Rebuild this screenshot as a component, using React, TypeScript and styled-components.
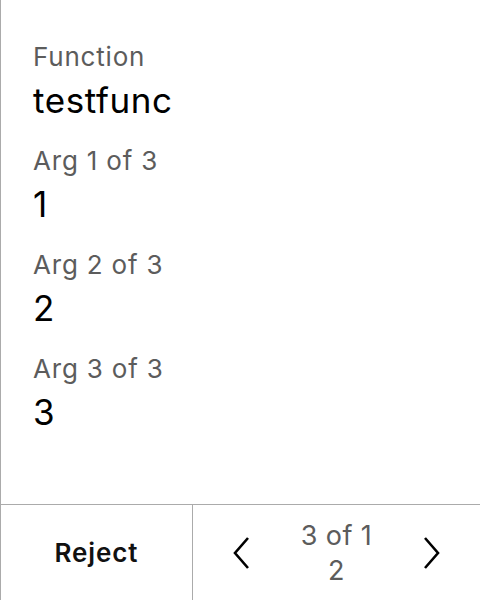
import React from 'react';
import styled, { createGlobalStyle } from 'styled-components';

const Global = createGlobalStyle`
  html, body {
    margin: 0;
    padding: 0;
    background: #fff;
  }
  body {
    font-family: Inter, "Noto Sans", sans-serif;
  }
`;

const Screen = styled.div`
  width: 480px;
  height: 600px;
  box-sizing: border-box;
  border-left: 1px solid #ababab;
  display: flex;
  flex-direction: column;
`;

const Details = styled.div`
  flex: 1;
  padding: 40px 0 0 32px;
  display: flex;
  flex-direction: column;
  gap: 22px;
`;

const Field = styled.div`
  display: flex;
  flex-direction: column;
  gap: 4px;
`;

const Label = styled.div`
  font-size: 26px;
  line-height: 34px;
  letter-spacing: 0.8px;
  color: #5c5c5c;
`;

const Value = styled.div`
  font-size: 35px;
  line-height: 44px;
  letter-spacing: 0.6px;
  color: #000;
`;

const Footer = styled.div`
  height: 95px;
  border-top: 1px solid #ababab;
  display: flex;
`;

const RejectButton = styled.button`
  width: 192px;
  border: none;
  border-right: 1px solid #ababab;
  background: none;
  font-family: inherit;
  font-size: 26px;
  font-weight: 600;
  letter-spacing: 0.9px;
  color: #111;
  padding: 0;
`;

const Pager = styled.div`
  flex: 1;
  display: grid;
  grid-template-columns: 1fr 1fr 1fr;
  align-items: center;
`;

const NavButton = styled.button`
  border: none;
  background: none;
  padding: 0;
  display: flex;
  justify-content: center;
  align-items: center;
`;

const Count = styled.div`
  text-align: center;
  font-size: 27px;
  line-height: 35px;
  letter-spacing: 0.4px;
  color: #5c5c5c;
  word-break: break-all;
  padding: 0 4px;
`;

const Chevron = ({ dir }: { dir: 'left' | 'right' }) => (
  <svg width="20" height="32" viewBox="0 0 20 32">
    <path
      d={dir === 'left' ? 'M17 1 L4 16 L17 31' : 'M3 1 L16 16 L3 31'}
      fill="none"
      stroke="#000"
      strokeWidth="2.6"
    />
  </svg>
);

const args = ['1', '2', '3'];

export default function App() {
  return (
    <>
      <Global />
      <Screen>
        <Details>
          <Field>
            <Label>Function</Label>
            <Value>testfunc</Value>
          </Field>
          {args.map((a, i) => (
            <Field key={i}>
              <Label>
                Arg {i + 1} of {args.length}
              </Label>
              <Value>{a}</Value>
            </Field>
          ))}
        </Details>
        <Footer>
          <RejectButton>Reject</RejectButton>
          <Pager>
            <NavButton>
              <Chevron dir="left" />
            </NavButton>
            <Count>3 of 12</Count>
            <NavButton>
              <Chevron dir="right" />
            </NavButton>
          </Pager>
        </Footer>
      </Screen>
    </>
  );
}
